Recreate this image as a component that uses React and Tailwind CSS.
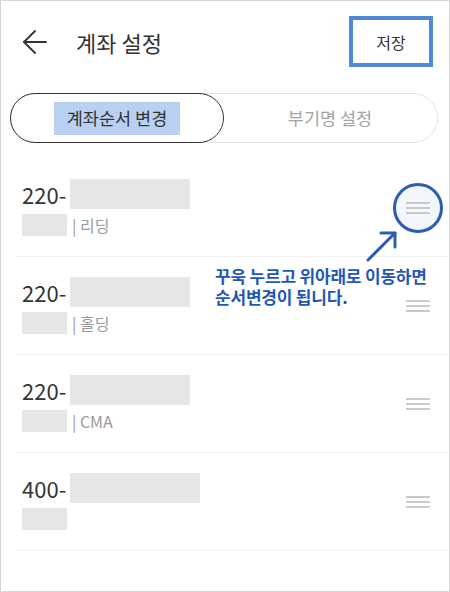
const accounts = [
    { prefix: '220-', blockW: 'w-[120px]', type: '리딩', highlight: true },
    { prefix: '220-', blockW: 'w-[120px]', type: '홀딩' },
    { prefix: '220-', blockW: 'w-[120px]', type: 'CMA' },
    { prefix: '400-', blockW: 'w-[130px]', type: null },
]

const DragHandle = ({ highlight }) => {
    return (
        <div className="relative w-[24px] h-[12px]">
            {highlight && (
                <div className="absolute left-[-13px] top-[-19px] w-[50px] h-[50px] rounded-full border-[3px] border-[#2a5db3] bg-[#f3f6fb]" />
            )}
            <div className="relative flex flex-col gap-[3px]">
                <span className="block h-[2px] w-full bg-[#cacaca]" />
                <span className="block h-[2px] w-full bg-[#cacaca]" />
                <span className="block h-[2px] w-full bg-[#cacaca]" />
            </div>
        </div>
    )
}

const App = () => {
    return (
        <div
            className="w-[450px] h-[592px] border border-[#d5d5d5] bg-white relative overflow-hidden"
            style={{ fontFamily: '"Noto Sans CJK KR", "Noto Sans", sans-serif' }}
        >
            {/* Header */}
            <div className="flex items-center justify-between pt-[15px] pl-[21px] pr-[16px]">
                <div className="flex items-center">
                    <svg width="26" height="26" viewBox="0 0 26 26" fill="none" stroke="#333" strokeWidth="1.8" strokeLinecap="round" strokeLinejoin="round">
                        <path d="M24 13H2" />
                        <path d="M13 2L2 13l11 11" />
                    </svg>
                    <h1 className="ml-[28px] text-[22px] text-[#333] leading-none">계좌 설정</h1>
                </div>
                <button className="w-[84px] h-[51px] border-[4px] border-[#4f87d9] text-[16px] text-[#333] flex items-center justify-center">
                    저장
                </button>
            </div>

            {/* Tabs */}
            <div className="mt-[26px] ml-[9px] mr-[11px] h-[50px] rounded-full border border-[#e3e3e3] flex">
                <div className="w-[214px] -m-px h-[50px] rounded-full border border-[#333] flex items-center justify-center">
                    <span className="bg-[#b9d0f1] px-[13px] h-[33px] flex items-center text-[17.5px] text-[#333]">계좌순서 변경</span>
                </div>
                <div className="flex-1 flex items-center justify-center text-[17.5px] text-[#a3a3a3]">부기명 설정</div>
            </div>

            {/* Account list */}
            <div className="mt-[16px] ml-[16px]">
                {accounts.map((acc, i) => (
                    <div key={i} className="h-[98px] border-b border-[#f0f0f0] flex items-center justify-between pl-[5px] pr-[19px]">
                        <div className="flex flex-col">
                            <div className="flex items-center h-[30px]">
                                <span className="w-[48px] text-[22px] text-[#333] leading-none">{acc.prefix}</span>
                                <span className={`${acc.blockW} h-[30px] bg-[#e6e6e6]`} />
                            </div>
                            <div className="flex items-center mt-[4px] h-[23px]">
                                <span className="w-[45px] h-[22px] bg-[#e6e6e6]" />
                                {acc.type && (
                                    <span className="ml-[5px] text-[16px] text-[#9a9a9a] leading-none">| {acc.type}</span>
                                )}
                            </div>
                        </div>
                        <DragHandle highlight={acc.highlight} />
                    </div>
                ))}
            </div>

            {/* Guide annotation */}
            <svg className="absolute left-[362px] top-[227px]" width="40" height="38" viewBox="0 0 40 38" fill="none" stroke="#2a5db3" strokeWidth="3" strokeLinecap="round" strokeLinejoin="round">
                <path d="M5 32L32 5" />
                <path d="M18 5h14v14" />
            </svg>
            <p className="absolute left-[214px] top-[264px] text-[17px] font-bold leading-[21px] text-[#1f57b9] tracking-[-0.2px]">
                꾸욱 누르고 위아래로 이동하면
                <br />
                순서변경이 됩니다.
            </p>
        </div>
    )
}

export default App
